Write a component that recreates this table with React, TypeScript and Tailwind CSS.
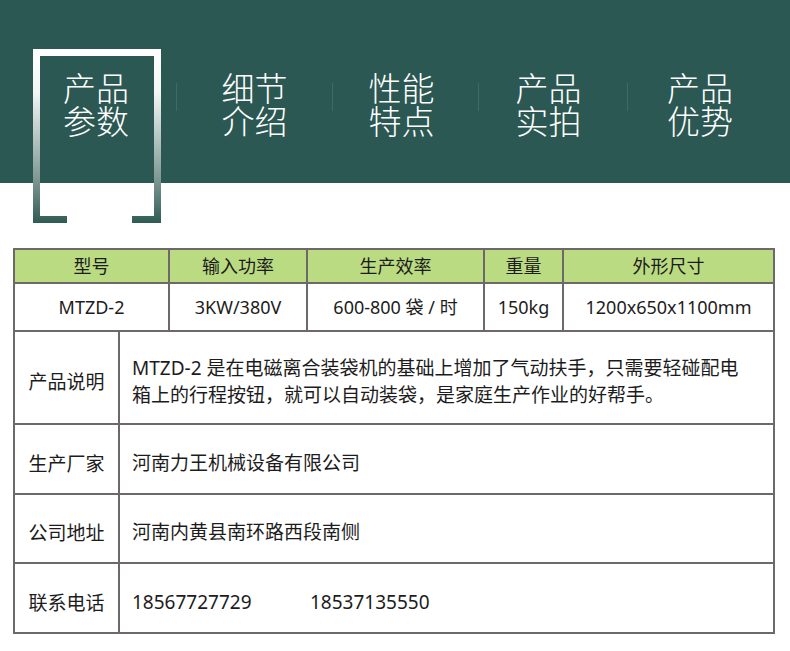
import React from "react";

const FONT = '"Noto Sans", "Noto Sans CJK SC", sans-serif';

function Bracket() {
  return (
    <svg
      className="absolute left-[33px] top-[49px]"
      width="128"
      height="174"
      viewBox="0 0 128 174"
    >
      <defs>
        <linearGradient id="bg" x1="0" y1="0" x2="0" y2="174" gradientUnits="userSpaceOnUse">
          <stop offset="0" stopColor="#ffffff" />
          <stop offset="0.25" stopColor="#f3f6f5" />
          <stop offset="0.75" stopColor="#7d9893" />
          <stop offset="1" stopColor="#2f5b55" />
        </linearGradient>
      </defs>
      <rect x="0" y="0" width="7" height="174" fill="url(#bg)" />
      <rect x="121" y="0" width="7" height="174" fill="url(#bg)" />
      <rect x="0" y="0" width="128" height="7" fill="url(#bg)" />
      <rect x="0" y="167" width="34" height="7" fill="url(#bg)" />
      <rect x="99" y="167" width="29" height="7" fill="url(#bg)" />
    </svg>
  );
}

function Tab({ a, b, cls }: { a: string; b: string; cls: string }) {
  return (
    <div className={`flex justify-center text-[33px] font-light leading-[33px] text-white ${cls}`}>
      <p className="text-center">
        {a}
        <br />
        {b}
      </p>
    </div>
  );
}

function Sep() {
  return <div className="mt-[12px] h-[28px] w-px bg-[#3f6b65]" />;
}

function InfoRow({
  label,
  h,
  children,
  last,
}: {
  label: string;
  h: string;
  children: React.ReactNode;
  last?: boolean;
}) {
  return (
    <div className={`flex ${h} ${last ? "" : "border-b-2 border-[#6d6969]"}`}>
      <div className="flex w-[105px] shrink-0 items-center justify-center border-r-2 border-[#6d6969] pt-[10px] text-[19px]">
        {label}
      </div>
      <div className="flex flex-1 items-center pl-[12px] pt-[8px] text-[19px]">{children}</div>
    </div>
  );
}

export default function App() {
  return (
    <div className="h-[651px] w-[790px] overflow-hidden bg-white text-[#1c1c1c]" style={{ fontFamily: FONT }}>
      <div className="relative h-[183px] bg-[#2c5853]">
        <Bracket />
        <div className="flex pt-[71px]" style={{ fontFamily: '"Noto Sans CJK SC", sans-serif' }}>
          <Tab a="产品" b="参数" cls="w-[176px] pl-[16px]" />
          <Sep />
          <Tab a="细节" b="介绍" cls="w-[155px]" />
          <Sep />
          <Tab a="性能" b="特点" cls="w-[145px] pr-[8px]" />
          <Sep />
          <Tab a="产品" b="实拍" cls="w-[148px] pr-[9px]" />
          <Sep />
          <Tab a="产品" b="优势" cls="w-[144px]" />
        </div>
      </div>

      <div className="ml-[13px] mt-[65px] w-[762px] border-2 border-[#6d6969]">
        <div className="flex h-[34px] border-b-2 border-[#6d6969] bg-[#bbdb82] text-[18px]">
          <div className="flex w-[155px] items-center justify-center border-r-2 border-[#6d6969]">型号</div>
          <div className="flex w-[138px] items-center justify-center border-r-2 border-[#6d6969]">输入功率</div>
          <div className="flex w-[177px] items-center justify-center border-r-2 border-[#6d6969]">生产效率</div>
          <div className="flex w-[79px] items-center justify-center border-r-2 border-[#6d6969]">重量</div>
          <div className="flex flex-1 items-center justify-center">外形尺寸</div>
        </div>
        <div className="flex h-[48px] border-b-2 border-[#6d6969] text-[18px]">
          <div className="flex w-[155px] items-center justify-center border-r-2 border-[#6d6969]">MTZD-2</div>
          <div className="flex w-[138px] items-center justify-center border-r-2 border-[#6d6969]">3KW/380V</div>
          <div className="flex w-[177px] items-center justify-center border-r-2 border-[#6d6969]">600-800 袋 / 时</div>
          <div className="flex w-[79px] items-center justify-center border-r-2 border-[#6d6969]">150kg</div>
          <div className="flex flex-1 items-center justify-center">1200x650x1100mm</div>
        </div>
        <InfoRow label="产品说明" h="h-[93px]">
          <div className="leading-[27px]">
            MTZD-2 是在电磁离合装袋机的基础上增加了气动扶手，只需要轻碰配电
            <br />
            箱上的行程按钮，就可以自动装袋，是家庭生产作业的好帮手。
          </div>
        </InfoRow>
        <InfoRow label="生产厂家" h="h-[70px]">
          河南力王机械设备有限公司
        </InfoRow>
        <InfoRow label="公司地址" h="h-[69px]">
          河南内黄县南环路西段南侧
        </InfoRow>
        <InfoRow label="联系电话" h="h-[68px]" last>
          <span className="w-[178px]">18567727729</span>
          <span>18537135550</span>
        </InfoRow>
      </div>
    </div>
  );
}
